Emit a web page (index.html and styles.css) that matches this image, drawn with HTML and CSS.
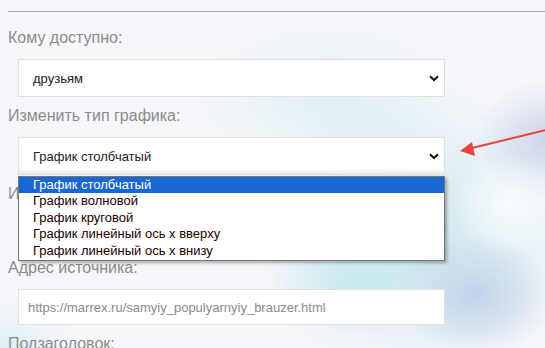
FILE: index.html
```html
<!DOCTYPE html>
<html lang="ru">
<head>
    <meta charset="UTF-8">
    <meta name="viewport" content="width=device-width, initial-scale=1.0">
    <title>Настройки графика</title>
    <link rel="stylesheet" href="styles.css">
</head>
<body>
    <div class="page">
        <div class="rule"></div>

        <!-- Доступ -->
        <div class="field">
            <div class="label">Кому доступно:</div>
            <div class="select">
                <span>друзьям</span>
                <svg class="chevron" width="10" height="7" viewBox="0 0 10 7"><path d="M1 1.2 L5 5 L9 1.2" fill="none" stroke="#111" stroke-width="2"/></svg>
            </div>
        </div>

        <!-- Тип графика -->
        <div class="field">
            <div class="label">Изменить тип графика:</div>
            <div class="select open">
                <span>График столбчатый</span>
                <svg class="chevron" width="10" height="7" viewBox="0 0 10 7"><path d="M1 1.2 L5 5 L9 1.2" fill="none" stroke="#111" stroke-width="2"/></svg>
                <ul class="dropdown">
                    <li class="selected">График столбчатый</li>
                    <li>График волновой</li>
                    <li>График круговой</li>
                    <li>График линейный ось х вверху</li>
                    <li>График линейный ось х внизу</li>
                </ul>
            </div>
        </div>

        <div class="field">
            <div class="label">Изображение:</div>
            <div class="select">
                <span>нет</span>
            </div>
        </div>

        <div class="field tight">
            <div class="label">Адрес источника:</div>
            <div class="input">https://marrex.ru/samyiy_populyarnyiy_brauzer.html</div>
        </div>

        <div class="field">
            <div class="label">Подзаголовок:</div>
        </div>
    </div>

    <!-- Стрелка-указатель -->
    <svg class="pointer" width="545" height="348" viewBox="0 0 545 348">
        <line x1="546" y1="130" x2="468" y2="149" stroke="#e8443c" stroke-width="2"/>
        <polygon points="460,151 472,142 475,156" fill="#e8443c"/>
    </svg>
</body>
</html>
```

FILE: styles.css
```css
body {
    margin: 0;
    height: 348px;
    overflow: hidden;
    font-family: "Liberation Sans", Arial, sans-serif;
    background-color: #f6f7fb;
    background-image:
        radial-gradient(ellipse 60px 50px at 510px 205px, rgba(250, 253, 255, 0.95), rgba(250, 253, 255, 0) 100%),
        radial-gradient(ellipse 70px 60px at 545px 140px, rgba(196, 204, 226, 0.8), rgba(196, 204, 226, 0) 100%),
        radial-gradient(ellipse 80px 60px at 475px 295px, rgba(192, 208, 232, 0.95), rgba(192, 208, 232, 0) 100%),
        radial-gradient(ellipse 90px 50px at 360px 285px, rgba(196, 234, 238, 0.95), rgba(196, 234, 238, 0) 100%),
        radial-gradient(ellipse 170px 150px at 420px 235px, rgba(204, 230, 236, 0.95), rgba(204, 230, 236, 0) 100%),
        radial-gradient(ellipse 140px 80px at 330px 100px, rgba(214, 235, 239, 0.7), rgba(214, 235, 239, 0) 100%),
        radial-gradient(ellipse 80px 50px at 0px 348px, rgba(218, 238, 242, 0.9), rgba(218, 238, 242, 0) 100%);
}
.page {
    padding-left: 8px;
}
.rule {
    margin-top: 11px;
    border-top: 1px solid #a9a9a9;
}
.field {
    margin-top: 9px;
}
.rule + .field {
    margin-top: 16px;
}
.field.tight {
    margin-top: 5px;
}
.label {
    font-size: 16px;
    line-height: 20px;
    color: #8b8b8b;
    margin-bottom: 11px;
}
.select, .input {
    position: relative;
    box-sizing: border-box;
    margin-left: 10px;
    width: 427px;
    height: 38px;
    padding-left: 14px;
    display: flex;
    align-items: center;
    background-color: white;
    border: 1px solid #e0e0e0;
    font-size: 13px;
    color: #222;
}
.select.open {
    box-shadow: inset 0 -5px 5px -3px rgba(0, 0, 0, 0.12);
}
.input {
    height: 36px;
    padding-left: 9px;
    font-size: 13px;
    color: #8a8a8a;
}
.chevron {
    position: absolute;
    right: 5px;
    top: 15px;
}
.dropdown {
    position: absolute;
    top: 38px;
    left: -1px;
    width: 427px;
    box-sizing: border-box;
    margin: 0;
    padding: 0 0 1px 0;
    list-style: none;
    background-color: white;
    border: 1px solid #767676;
    box-shadow: 2px 2px 3px rgba(0, 0, 0, 0.3);
    z-index: 2;
}
.dropdown li {
    height: 16.4px;
    line-height: 16px;
    padding-left: 14px;
    font-size: 13px;
    color: #1a0000;
}
.dropdown li.selected {
    background-color: #1967d2;
    color: white;
}
.pointer {
    position: absolute;
    left: 0;
    top: 0;
    pointer-events: none;
    z-index: 3;
}
```
